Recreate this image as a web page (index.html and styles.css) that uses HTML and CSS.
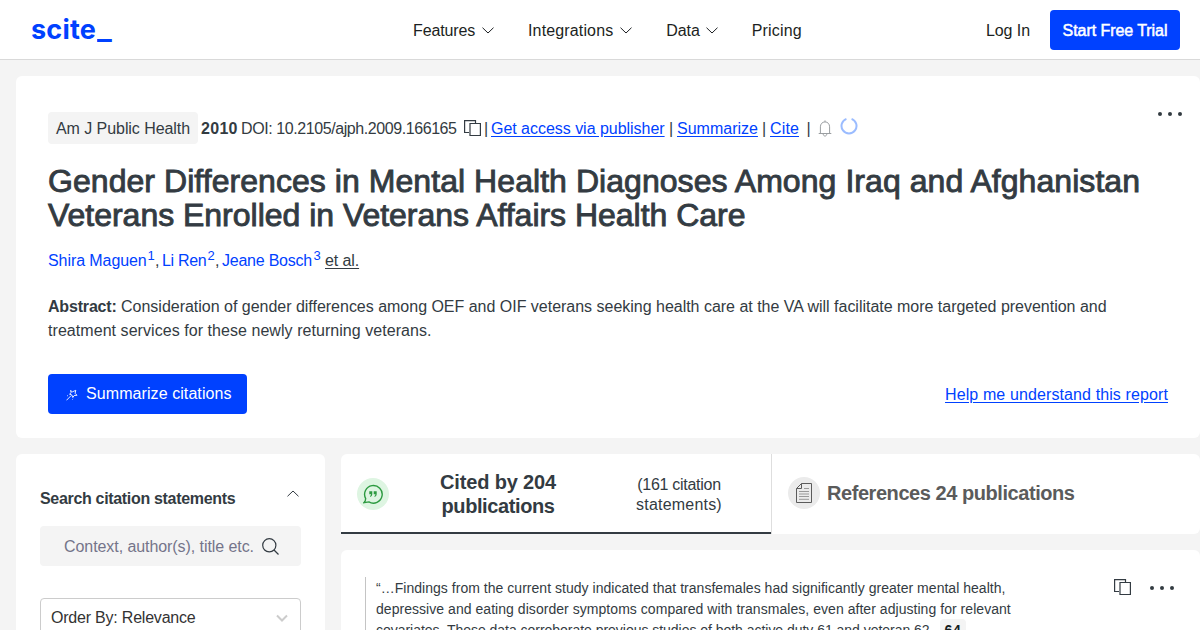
FILE: index.html
```html
<!DOCTYPE html>
<html lang="en">
<head>
<meta charset="utf-8">
<title>Gender Differences in Mental Health Diagnoses Among Iraq and Afghanistan Veterans - scite</title>
<link rel="stylesheet" href="styles.css">
</head>
<body>
<header class="site-header">
  <a class="logo" href="#">scite<span class="underscore">_</span></a>
  <nav class="nav">
    <a class="nav-item features" href="#"><span>Features</span><svg class="chevron" viewBox="0 0 12 7"><path d="M.5.7 6 6 11.5.7"/></svg></a>
    <a class="nav-item integrations" href="#"><span>Integrations</span><svg class="chevron" viewBox="0 0 12 7"><path d="M.5.7 6 6 11.5.7"/></svg></a>
    <a class="nav-item data" href="#"><span>Data</span><svg class="chevron" viewBox="0 0 12 7"><path d="M.5.7 6 6 11.5.7"/></svg></a>
    <a class="nav-item pricing" href="#"><span>Pricing</span></a>
  </nav>
  <div class="account">
    <a class="login" href="#">Log In</a>
    <a class="trial" href="#">Start Free Trial</a>
  </div>
</header>

<main class="page">
  <section class="card paper">
    <div class="meta">
      <span class="journal">Am J Public Health</span>
      <strong class="year">2010</strong>
      <span class="doi">DOI: 10.2105/ajph.2009.166165</span>
      <svg class="copy" viewBox="0 0 17 16"><path d="M5 12.500H.6V.6h10.900V3"/><path d="M6 3.500h10.400v12H6z"/></svg>
      <span class="bar bar-a">|</span>
      <a class="link publisher" href="#">Get access via publisher</a>
      <span class="bar bar-b">|</span>
      <a class="link summarize" href="#">Summarize</a>
      <span class="bar bar-c">|</span>
      <a class="link cite" href="#">Cite</a>
      <span class="bar bar-d">|</span>
      <svg class="bell" viewBox="0 0 14 17"><path d="M.7 13.500H13.300M2.400 13.300V6.800C2.400 4 4.300 1.900 7 1.900s4.600 2.100 4.600 4.900v6.500M7 .4v1.500M5.200 13.800c0 3 3.600 3 3.600 0"/></svg>
      <svg class="spinner" viewBox="0 0 18 18"><path d="M11.600 1.900A7.500 7.500 0 1 1 6.400 1.900"/></svg>
      <svg class="dots" viewBox="0 0 24 4"><circle cx="2" cy="2" r="2"/><circle cx="12" cy="2" r="2"/><circle cx="22" cy="2" r="2"/></svg>
    </div>
    <h1 class="title"><span class="title-a">Gender Differences in Mental Health Diagnoses Among Iraq and Afghanistan</span> <span class="title-b">Veterans Enrolled in Veterans Affairs Health Care</span></h1>
    <div class="authors">
      <a class="maguen" href="#">Shira Maguen</a><sup>1</sup><span class="comma">,</span><a class="ren" href="#">Li Ren</a><sup>2</sup><span class="comma">,</span><a class="bosch" href="#">Jeane Bosch</a><sup>3</sup><a class="et-al" href="#">et al.</a>
    </div>
    <p class="abstract"><strong>Abstract:</strong> Consideration of gender differences among OEF and OIF veterans seeking health care at the VA will facilitate more targeted prevention and <span class="abstract-end">treatment services for these newly returning veterans.</span></p>
    <div class="actions">
      <a class="summarize-btn" href="#"><svg class="wand" viewBox="0 0 12 12"><path d="M.5 11.300 5 6.700M4.500 1.500l2 1.300 3.300-1.500-.7 3 1.900 2-2.800.2-1.400 2-1-2.600-2.200-.6 1.500-1.700zM2 6.500l-.8.4M6.500 10.500l.4-.6"/></svg><span>Summarize citations</span></a>
      <a class="link help" href="#">Help me understand this report</a>
    </div>
  </section>

  <div class="columns">
    <aside class="card sidebar">
      <div class="side-head">
        <h2>Search citation statements</h2>
        <svg class="chevron" viewBox="0 0 12 7"><path d="M.5 6.300 6 1l5.500 5.300"/></svg>
      </div>
      <div class="search"><span>Context, author(s), title etc.</span><svg viewBox="0 0 17 17"><circle cx="7.300" cy="7.300" r="6.600"/><path d="m12 12 4.500 4.500"/></svg></div>
      <div class="select"><span>Order By: Relevance</span><svg viewBox="0 0 12 8"><path d="m1 1.500 5 5 5-5"/></svg></div>
    </aside>

    <div class="results">
      <div class="tabs">
        <div class="tab cited">
          <span class="badge badge-green"><svg viewBox="0 0 20 20"><path d="M2.700 14.600A8.800 8.800 0 1 1 5.900 17.900L.8 18.700C2.200 17.600 2.700 16.500 2.700 14.600z"/><path class="quote" d="M6.300 7.200h3v2.800c0 1.600-.9 2.500-2.200 2.900v-1c.7-.3.900-.8.900-1.600H6.300zM10.700 7.200h3v2.800c0 1.600-.9 2.500-2.200 2.900v-1c.7-.3.900-.8.900-1.600h-1.700z"/></svg></span>
          <h3 class="cited-title"><span class="cited-a">Cited by 204</span><br><span class="cited-b">publications</span></h3>
          <div class="statements"><span class="st-a">(161 citation</span><br><span class="st-b">statements)</span></div>
        </div>
        <div class="tab references">
          <span class="badge badge-gray"><svg viewBox="0 0 16 20"><path d="M5.500.5h10v19H.5v-14zM5.500.5v5h-5"/><path class="rules" d="M8 5.500h5M3 8.500h10M3 11h10M3 13.500h10M3 16.300h10"/></svg></span>
          <h3>References 24 publications</h3>
        </div>
      </div>
      <article class="card excerpt">
        <blockquote><span class="q1">“…Findings from the current study indicated that transfemales had significantly greater mental health,</span><br><span class="q2">depressive and eating disorder symptoms compared with transmales, even after adjusting for relevant</span><br><span class="q3">covariates. These data corroborate previous studies of both active duty 61 and veteran 62.</span><strong class="ref">64</strong></blockquote>
        <svg class="copy" viewBox="0 0 17 16"><path d="M5 12.500H.6V.6h10.900V3"/><path d="M6 3.500h10.400v12H6z"/></svg>
        <svg class="dots" viewBox="0 0 24 4"><circle cx="2" cy="2" r="2"/><circle cx="12" cy="2" r="2"/><circle cx="22" cy="2" r="2"/></svg>
      </article>
    </div>
  </div>
</main>
</body>
</html>
```
FILE: styles.css
```css
* { box-sizing: border-box; }
body {
  margin: 0;
  height: 630px;
  overflow: hidden;
  background: #f4f4f4;
  color: #333b42;
  font: 16px/24px "Liberation Sans", Arial, sans-serif;
}
a { color: inherit; text-decoration: none; }
h1, h2, h3, p, blockquote { margin: 0; }
svg { display: block; flex: none; fill: none; stroke: currentColor; }

/* Header */
.site-header {
  display: flex;
  height: 60px;
  padding-right: 20px;
  align-items: center;
  background: #fff;
  border-bottom: 1px solid #d9d9d9;
  color: #1c1f22;
}
.logo {
  width: 382px;
  padding-left: 31px;
  color: #0041ff;
  font: 700 27px/32px Inter, sans-serif;
  letter-spacing: .2px;
}
.underscore { display: inline-block; margin-left: .5px; transform: scaleX(1.15); transform-origin: left; }
.nav { display: flex; flex: 1; padding-top: 2px; }
.nav-item { display: flex; gap: 7px; align-items: center; white-space: nowrap; }
.chevron { width: 12px; height: 7px; }
.features, .integrations, .data { padding-right: 34px; }
.features { margin-left: 31px; letter-spacing: -.14px; }
.integrations { letter-spacing: .14px; }
.data { gap: 6px; letter-spacing: -.1px; }
.pricing { letter-spacing: .16px; }
.account { display: flex; gap: 20px; align-items: center; }
.login { padding-top: 2px; letter-spacing: -.06px; }
.trial {
  width: 130px;
  height: 40px;
  border-radius: 4px;
  background: #0041ff;
  color: #fff;
  line-height: 41px;
  text-align: center;
  letter-spacing: -.06px;
  -webkit-text-stroke: .5px #fff;
}

/* Paper summary */
.page { display: flex; flex-direction: column; height: 570px; padding: 16px 0 0 16px; }
.card { background: #fff; border-radius: 6px; }
.paper { flex: none; height: 362px; padding: 36px 32px 24px; }
.meta { display: flex; align-items: center; height: 32px; white-space: nowrap; }
.journal { width: 150px; height: 32px; padding-left: 8px; border-radius: 4px; background: #f4f4f4; line-height: 33px; letter-spacing: -.06px; }
.year, .doi, .bar, .meta .link { padding-top: 2px; }
.year { margin-left: 3px; width: 40px; letter-spacing: .3px; }
.doi { width: 223px; letter-spacing: -.42px; }
.copy { width: 17px; height: 16px; stroke-width: 1.200; }
.bar { text-align: center; }
.bar-a { width: 10px; }
.link { color: #0041ff; text-decoration: underline; text-underline-offset: 2px; }
.bar-b, .bar-c { width: 12px; }
.publisher { width: 174px; letter-spacing: -.03px; }
.summarize { width: 81px; }
.cite { width: 29px; letter-spacing: .14px; }
.bar-d { width: 19px; }
.bell { width: 14px; height: 17px; color: #9a9ea1; }
.spinner { width: 18px; height: 18px; margin: -5px 0 0 8px; color: #9bbcff; stroke-width: 2; }
.dots { width: 24px; height: 4px; fill: currentColor; stroke: none; }
.meta .dots { margin: -28px -14px 0 auto; }
.title { margin-top: 20px; font-size: 32px; line-height: 34px; font-weight: 400; white-space: nowrap; -webkit-text-stroke: .9px currentColor; }
.title span { display: block; }
.title-a { letter-spacing: .055px; }
.title-b { letter-spacing: -.02px; }
.authors { display: flex; margin-top: 16px; height: 24px; color: #0041ff; line-height: 25px; white-space: nowrap; }
.authors sup { width: 8px; margin-top: -5px; font-size: 13px; vertical-align: top; text-align: center; }
.maguen { width: 99px; letter-spacing: -.08px; }
.ren { width: 45px; letter-spacing: -.3px; }
.bosch { width: 91px; letter-spacing: -.23px; }
.comma { width: 7px; color: #333b42; }
.et-al { margin-left: 4px; color: #333b42; text-decoration: underline; text-underline-offset: 2px; letter-spacing: -.1px; }
.abstract { margin-top: 22px; height: 48px; line-height: 24px; padding-top: 1px; white-space: nowrap; letter-spacing: -.015px; }
.abstract strong { letter-spacing: -.18px; }
.abstract-end { display: block; letter-spacing: .055px; }
.actions { display: flex; justify-content: space-between; align-items: center; margin-top: 32px; }
.summarize-btn { display: flex; gap: 8px; align-items: center; width: 199px; height: 40px; padding-left: 18px; border-radius: 4px; background: #0041ff; color: #fff; letter-spacing: .08px; }
.wand { width: 12px; height: 12px; margin-top: 1px; stroke-width: .9; }
.help { padding-top: 2px; letter-spacing: .11px; }

/* Search sidebar */
.columns { display: flex; flex: 1; min-height: 0; gap: 16px; margin-top: 16px; }
.sidebar { width: 309px; flex: none; padding: 32px 24px 0; border-radius: 6px 6px 0 0; }
.side-head { display: flex; justify-content: space-between; padding-right: 2px; height: 40px; }
.side-head h2 { padding-top: 1px; font: inherit; font-weight: 700; letter-spacing: -.32px; }
.side-head .chevron { margin-top: 4px; }
.search, .select { display: flex; align-items: center; height: 40px; width: 261px; border-radius: 4px; }
.search { padding-left: 24px; background: #f4f4f4; color: #74748a; letter-spacing: -.07px; gap: 8px; white-space: nowrap; }
.search span { padding-top: 2px; }
.search svg { width: 17px; height: 17px; color: #333b42; stroke-width: 1.200; }
.select { justify-content: space-between; margin-top: 32px; padding: 0 12px 0 10px; border: 1px solid #ccc; letter-spacing: -.21px; color: #333; }
.select svg { width: 12px; height: 8px; color: #ccc; stroke-width: 2; }

/* Results */
.results { display: flex; flex-direction: column; flex: 1; }
.tabs { display: flex; flex: none; height: 80px; border-radius: 6px 6px 6px 0; background: #fff; }
.tab { display: flex; align-items: center; }
.tab h3 { font-size: 20px; line-height: 24px; font-weight: 700; white-space: nowrap; }
.cited { width: 430px; border-bottom: 2px solid #333b42; padding: 2px 0 0 16px; }
.badge { display: grid; place-items: center; width: 32px; height: 32px; border-radius: 50%; }
.badge-green { background: #def5e2; color: #2c9a40; }
.badge-green svg { width: 20px; height: 20px; stroke-width: 1.400; }
.badge-green .quote { fill: currentColor; stroke: none; }
.cited-title { width: 218px; text-align: center; }
.cited-a { letter-spacing: -.15px; }
.cited-b { letter-spacing: -.4px; }
.statements { width: 116px; margin: 2px 0 0 14px; line-height: 20px; text-align: center; }
.st-a { letter-spacing: -.28px; }
.st-b { letter-spacing: .2px; }
.references { flex: 1; padding: 0 0 2px 16px; border-left: 1px solid #dedede; gap: 7px; color: #5b5b5b; }
.references h3 { letter-spacing: -.44px; }
.badge-gray { background: #ebebeb; }
.badge-gray svg { width: 16px; height: 20px; }
.rules { stroke: #999; }
.excerpt { display: flex; flex: 1; min-height: 0; overflow: hidden; margin-top: 16px; padding: 27px 26px 0 24px; border-radius: 6px 6px 0 0; }
.excerpt blockquote { width: 749px; padding-left: 10px; border-left: 1px solid #c4c4c4; font-size: 14px; line-height: 21px; padding-top: 1px; white-space: nowrap; }
.q1 { letter-spacing: .03px; }
.q2 { letter-spacing: .045px; }
.q3 { letter-spacing: -.03px; }
.ref { margin-left: 7px; padding: 3px 4px; border-radius: 4px; background: #f4f4f4; color: #14201f; letter-spacing: .8px; }
.excerpt .copy { margin-top: 2px; }
.excerpt .dots { margin: 9px 0 0 auto; }
```
